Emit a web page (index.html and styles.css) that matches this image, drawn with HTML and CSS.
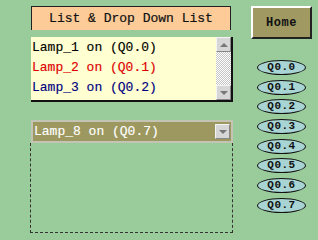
FILE: index.html
```html
<!DOCTYPE html>
<html lang="en">
<head>
    <meta charset="UTF-8">
    <title>List &amp; Drop Down List</title>
    <link rel="stylesheet" href="styles.css">
</head>
<body>
    <div class="screen">
        <div class="left">
            <div class="title">List &amp; Drop Down List</div>
            <div class="listbox">
                <div class="items">
                    <div class="item">Lamp_1 on (Q0.0)</div>
                    <div class="item red">Lamp_2 on (Q0.1)</div>
                    <div class="item navy">Lamp_3 on (Q0.2)</div>
                </div>
                <div class="scrollbar">
                    <div class="sbtn"><span class="tri up"></span></div>
                    <div class="track"></div>
                    <div class="sbtn"><span class="tri down"></span></div>
                </div>
            </div>
            <div class="dropdown">
                <div class="dd-text">Lamp_8 on (Q0.7)</div>
                <div class="dd-btn"><span class="tri down"></span></div>
            </div>
            <div class="dashbox"></div>
        </div>
        <div class="right">
            <button class="home">Home</button>
            <div class="lamps">
                <div class="lamp">Q0.0</div>
                <div class="lamp">Q0.1</div>
                <div class="lamp">Q0.2</div>
                <div class="lamp">Q0.3</div>
                <div class="lamp">Q0.4</div>
                <div class="lamp">Q0.5</div>
                <div class="lamp">Q0.6</div>
                <div class="lamp">Q0.7</div>
            </div>
        </div>
    </div>
</body>
</html>
```

FILE: styles.css
```css
* {
    margin: 0;
    padding: 0;
    box-sizing: border-box;
}
html, body {
    width: 318px;
    height: 240px;
    background: #9acb9a;
    font-family: 'Liberation Mono', 'DejaVu Sans Mono', monospace;
    overflow: hidden;
}
.screen {
    display: flex;
    padding: 6px 0 0 31px;
}
.left {
    width: 202px;
    display: flex;
    flex-direction: column;
}
.title {
    width: 200px;
    height: 24px;
    background: #fccb98;
    border: 1px solid #222;
    border-bottom: none;
    font-size: 13px;
    line-height: 23px;
    text-align: center;
    color: #111;
    -webkit-text-stroke: 0.2px #111;
}
.listbox {
    margin-top: 7px;
    height: 65px;
    display: flex;
    background: #ffffd2;
    border-right: 2px solid #111;
    border-bottom: 2px solid #111;
}
.items {
    flex: 1;
    padding: 1px 0 0 1px;
}
.item {
    font-size: 13px;
    line-height: 20px;
    color: #000;
    -webkit-text-stroke: 0.15px currentColor;
}
.item.red {
    color: #e00000;
}
.item.navy {
    color: #000080;
}
.scrollbar {
    width: 15px;
    display: flex;
    flex-direction: column;
}
.track {
    flex: 1;
    background: repeating-conic-gradient(#c4c4c4 0 25%, #fff 0 50%) 0 0 / 2px 2px;
}
.sbtn {
    height: 15px;
    background: #d6d6d6;
    border-top: 1px solid #f4f4f4;
    border-left: 1px solid #f4f4f4;
    border-right: 1px solid #888;
    border-bottom: 1px solid #888;
    display: flex;
    align-items: center;
    justify-content: center;
}
.tri {
    width: 0;
    height: 0;
    border-left: 4px solid transparent;
    border-right: 4px solid transparent;
}
.tri.up {
    border-bottom: 4px solid #777;
}
.tri.down {
    border-top: 4px solid #777;
}
.dropdown {
    margin-top: 18px;
    height: 23px;
    display: flex;
    align-items: center;
    background: #9c9860;
    border: 2px solid #c4c4b4;
    padding-right: 1px;
}
.dd-text {
    flex: 1;
    font-size: 13px;
    color: #fff;
    padding-left: 1px;
    -webkit-text-stroke: 0.15px #fff;
}
.dd-btn {
    width: 15px;
    height: 15px;
    background: #d6d6d6;
    border-top: 1px solid #f4f4f4;
    border-left: 1px solid #f4f4f4;
    border-right: 1px solid #888;
    border-bottom: 1px solid #888;
    display: flex;
    align-items: center;
    justify-content: center;
}
.dashbox {
    height: 90px;
    border: 1px dashed #333;
    border-top: none;
    margin-left: -1px;
}
.right {
    width: 61px;
    margin-left: 18px;
    display: flex;
    flex-direction: column;
    align-items: center;
}
.home {
    width: 61px;
    height: 33px;
    background: #a09a62;
    border-top: 2px solid #fff;
    border-left: 2px solid #fff;
    border-right: 2px solid #222;
    border-bottom: 2px solid #222;
    font-family: 'Liberation Mono', monospace;
    font-size: 12px;
    font-weight: bold;
    letter-spacing: 0.5px;
    color: #111;
}
.lamps {
    margin-top: 21px;
    display: flex;
    flex-direction: column;
    gap: 4.7px;
}
.lamp {
    width: 49px;
    height: 15px;
    border: 1px solid #111;
    border-radius: 50%;
    background: #a8d4d4;
    font-size: 11px;
    font-weight: bold;
    letter-spacing: 0.5px;
    line-height: 13px;
    text-align: center;
    color: #111;
}
```
